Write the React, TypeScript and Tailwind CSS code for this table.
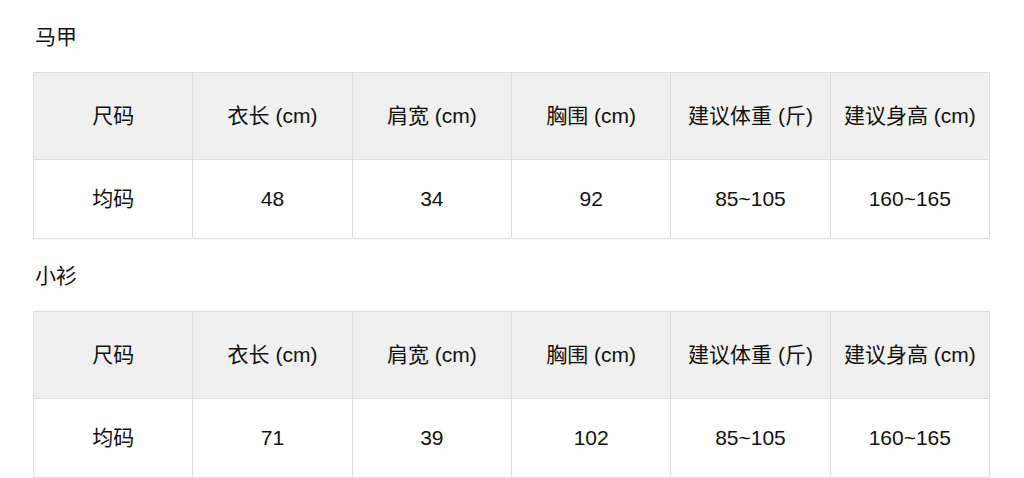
import React from 'react';

interface SizeRow {
  size: string;
  length: string;
  shoulder: string;
  chest: string;
  weight: string;
  height: string;
}

const headers = ['尺码', '衣长 (cm)', '肩宽 (cm)', '胸围 (cm)', '建议体重 (斤)', '建议身高 (cm)'];

const sections: { title: string; row: SizeRow }[] = [
  { title: '马甲', row: { size: '均码', length: '48', shoulder: '34', chest: '92', weight: '85~105', height: '160~165' } },
  { title: '小衫', row: { size: '均码', length: '71', shoulder: '39', chest: '102', weight: '85~105', height: '160~165' } },
];

const SizeTable: React.FC<{ title: string; row: SizeRow }> = ({ title, row }) => {
  const cells = [row.size, row.length, row.shoulder, row.chest, row.weight, row.height];
  return (
    <div>
      <h2 className="text-[21px] leading-[28px] text-[#111] pl-[2px]">{title}</h2>
      <table className="mt-[21px] w-[957px] table-fixed border-collapse text-[21px] text-[#111]">
        <thead>
          <tr className="h-[87px] bg-[#f0f0f0]">
            {headers.map(h => (
              <th key={h} className="border border-[#dcdcdc] font-normal text-center whitespace-nowrap">{h}</th>
            ))}
          </tr>
        </thead>
        <tbody>
          <tr className="h-[79px]">
            {cells.map((c, i) => (
              <td key={i} className="border border-[#dcdcdc] text-center">{c}</td>
            ))}
          </tr>
        </tbody>
      </table>
    </div>
  );
};

export default function App() {
  return (
    <div
      className="bg-white min-h-[478px] pl-[33px] pt-[23px] flex flex-col gap-[23px]"
      style={{ fontFamily: '"Liberation Sans", "Noto Sans CJK SC", sans-serif' }}
    >
      {sections.map(s => (
        <SizeTable key={s.title} title={s.title} row={s.row} />
      ))}
    </div>
  );
}
